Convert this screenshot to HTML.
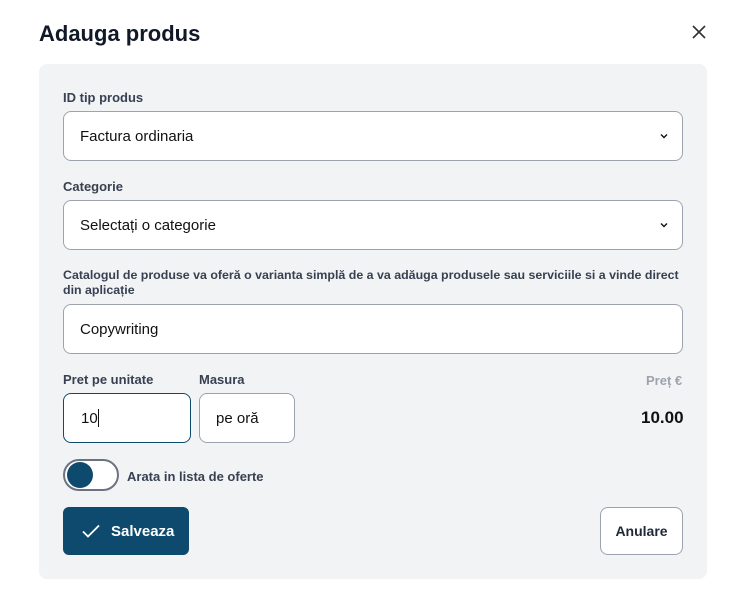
<!DOCTYPE html>
<html><head><style>
*{box-sizing:border-box;margin:0;padding:0}
body{width:744px;height:609px;background:#fff;font-family:"Liberation Sans",sans-serif;position:relative;overflow:hidden;color:#111}
.abs{position:absolute}
h1{position:absolute;left:39px;top:21px;font-size:22px;font-weight:bold;color:#111827}
.panel{position:absolute;left:39px;top:64px;width:668px;height:515px;background:#f2f3f5;border-radius:8px}
.lbl{position:absolute;font-size:13px;font-weight:bold;color:#374151}
.box{position:absolute;background:#fff;border:1px solid #9ca3af;border-radius:8px;font-size:15px;color:#111;padding-left:16px;display:flex;align-items:center}
.chev{position:absolute;right:14px;top:50%;margin-top:-3px}
</style></head><body>
<h1>Adauga produs</h1>
<svg class="abs" style="left:692px;top:25px" width="14" height="14" viewBox="0 0 14 14"><path d="M1 1L13 13M13 1L1 13" stroke="#333" stroke-width="1.6"/></svg>
<div class="panel"></div>
<div class="lbl" style="left:63px;top:90px">ID tip produs</div>
<div class="box" style="left:63px;top:111px;width:620px;height:50px">Factura ordinaria<svg class="chev" width="8" height="6" viewBox="0 0 8 6"><path d="M1 1.5L4 4.5L7 1.5" stroke="#111" stroke-width="1.4" fill="none"/></svg></div>
<div class="lbl" style="left:63px;top:179px">Categorie</div>
<div class="box" style="left:63px;top:200px;width:620px;height:50px">Selectați o categorie<svg class="chev" width="8" height="6" viewBox="0 0 8 6"><path d="M1 1.5L4 4.5L7 1.5" stroke="#111" stroke-width="1.4" fill="none"/></svg></div>
<div class="lbl" style="left:63px;top:268px;width:620px;line-height:15px;font-size:12.4px">Catalogul de produse va oferă o varianta simplă de a va adăuga produsele sau serviciile si a vinde direct din aplicație</div>
<div class="box" style="left:63px;top:304px;width:620px;height:50px">Copywriting</div>
<div class="lbl" style="left:63px;top:372px">Pret pe unitate</div>
<div class="lbl" style="left:199px;top:372px">Masura</div>
<div class="lbl" style="left:646px;top:373px;color:#9ca3af">Preț €</div>
<div class="box" style="left:63px;top:393px;width:128px;height:50px;border-color:#0e4a6e;padding-left:17px">10<span style="display:inline-block;width:1px;height:18px;background:#111"></span></div>
<div class="box" style="left:199px;top:393px;width:96px;height:50px">pe oră</div>
<div class="abs" style="left:641px;top:408px;font-size:17px;font-weight:bold;color:#111">10.00</div>
<div class="abs" style="left:63px;top:459px;width:56px;height:32px;border:2px solid #6b7280;border-radius:16px;background:#fff"></div>
<div class="abs" style="left:67px;top:462px;width:26px;height:26px;border-radius:50%;background:#0e4a6e"></div>
<div class="lbl" style="left:127px;top:469px">Arata in lista de oferte</div>
<div class="abs" style="left:63px;top:507px;width:126px;height:48px;background:#0e4a6e;border-radius:6px;color:#fff;font-size:15px;font-weight:bold;display:flex;align-items:center;padding-left:19px">
<svg width="18" height="14" viewBox="0 0 18 14" style="margin-right:11px"><path d="M1 7.5L6 12.5L17 1.5" stroke="#fff" stroke-width="1.8" fill="none"/></svg>Salveaza</div>
<div class="abs" style="left:600px;top:507px;width:83px;height:48px;background:#fff;border:1px solid #9ca3af;border-radius:8px;font-size:14px;font-weight:bold;color:#1f2937;display:flex;align-items:center;justify-content:center">Anulare</div>
</body></html>
